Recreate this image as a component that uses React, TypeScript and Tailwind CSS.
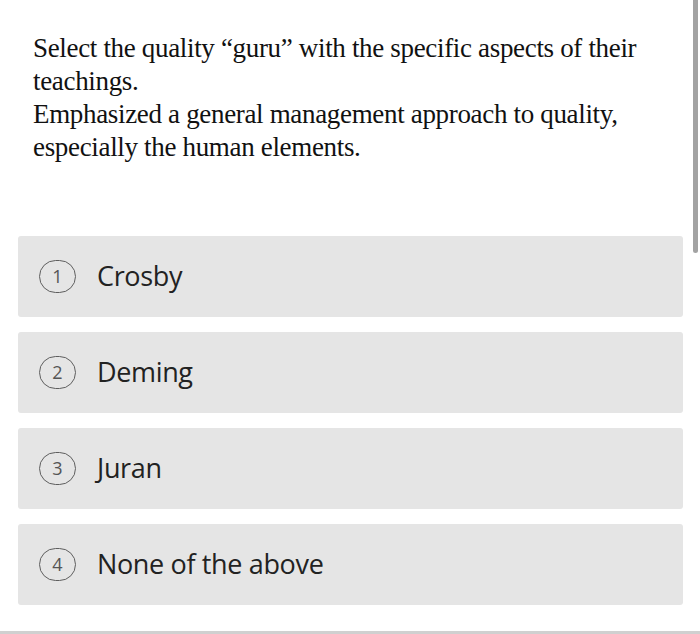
import React from 'react';

const options = ['Crosby', 'Deming', 'Juran', 'None of the above'];

export default function App() {
    return (
        <div className="relative w-[700px] h-[634px] bg-white overflow-hidden">
            {/* scrollbar */}
            <div className="absolute right-[2px] top-0 w-[5px] h-[253px] bg-[#a3a3a3] rounded-b-sm" />

            <div className="pt-[32px] px-[33px] pr-[40px]">
                <p
                    className="text-[27px] leading-[33px] text-[#111] tracking-[-0.33px]"
                    style={{ fontFamily: '"Liberation Serif", "Times New Roman", serif' }}
                >
                    Select the quality “guru” with the specific aspects of their teachings.
                    <br />
                    Emphasized a general management approach to quality, especially the human elements.
                </p>
            </div>

            {/* Options */}
            <div className="mt-[72px] px-[18px] pr-[17px] flex flex-col gap-[15px]">
                {options.map((opt, i) => (
                    <div
                        key={opt}
                        className="h-[81px] bg-[#e5e5e5] rounded-[3px] flex items-center pl-[21px]"
                        style={{ fontFamily: '"Open Sans", sans-serif' }}
                    >
                        <div className="w-[37px] h-[33px] rounded-full border-[1.5px] border-[#5e5e5e] flex items-center justify-center text-[18px] text-[#555]">
                            {i + 1}
                        </div>
                        <span className="ml-[21px] text-[27px] text-[#222] tracking-[-0.35px]">{opt}</span>
                    </div>
                ))}
            </div>

            {/* bottom rule */}
            <div className="absolute left-0 bottom-0 w-full h-[3px] bg-[#d0d0d0]" />
        </div>
    );
}
